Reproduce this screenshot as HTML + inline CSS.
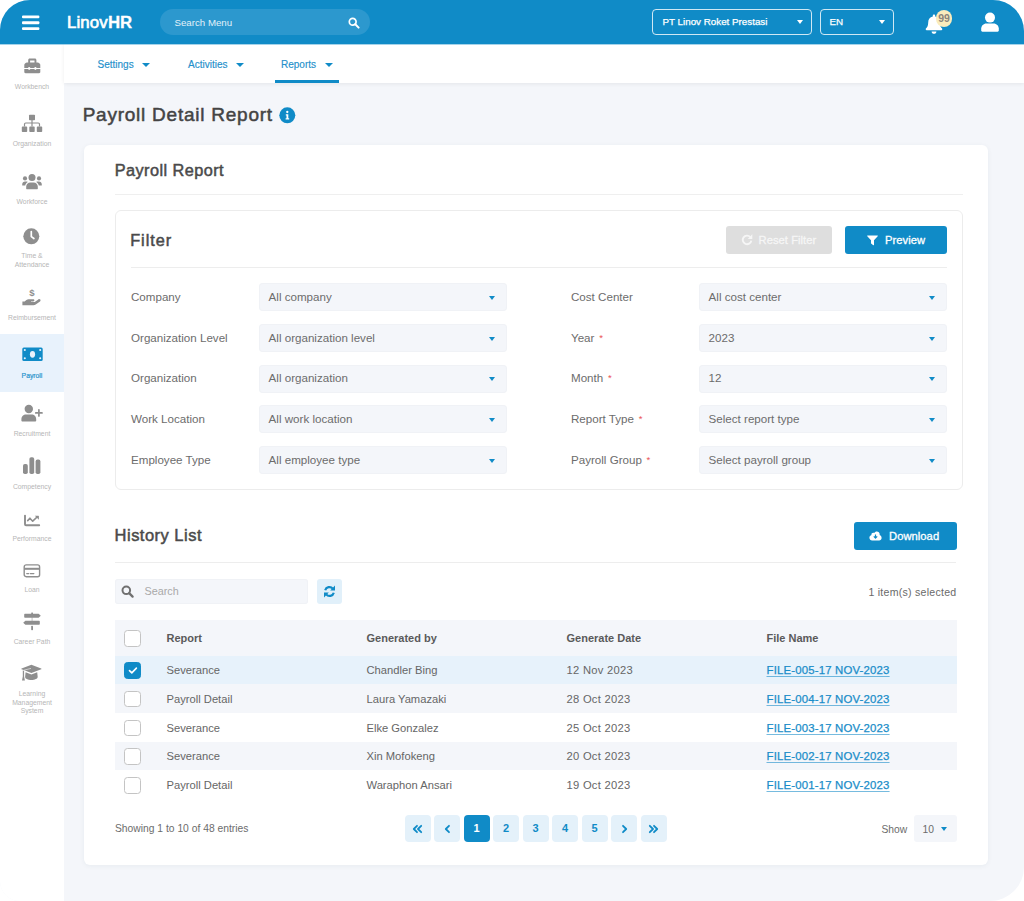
<!DOCTYPE html>
<html lang="en">
<head>
<meta charset="utf-8">
<title>Payroll Detail Report - LinovHR</title>
<style>
*{box-sizing:border-box;margin:0;padding:0}
html,body{width:1024px;height:901px;background:#fff;overflow:hidden}
body{font-family:"Liberation Sans",sans-serif;color:#4a4a4a;font-size:11px}
#app{position:absolute;left:0;top:0;width:1024px;height:901px;background:#f4f6fa;border-radius:30px 31px 34px 20px;overflow:hidden}
.abs{position:absolute}
#topbar{position:absolute;left:0;top:0;width:1024px;height:45px;background:#108bc7;background-clip:padding-box;border-bottom:1px solid rgba(16,139,199,.38)}
#subnav{position:absolute;left:64px;top:44px;width:960px;height:39px;background:#fff;box-shadow:0 1px 4px rgba(0,0,0,.07)}
#sidebar{position:absolute;left:0;top:44px;width:64px;height:857px;background:#fff}
.t{position:absolute;white-space:nowrap;line-height:1}
#topbar .pill{position:absolute;left:160px;top:9px;width:210px;height:26px;border-radius:13px;background:#2c98ce}
#topbar .sel{position:absolute;top:9px;height:26px;border:1px solid rgba(255,255,255,.8);border-radius:4px}
.w{color:#fff}
.caret{position:absolute;width:0;height:0;border-left:3.5px solid transparent;border-right:3.5px solid transparent;border-top:4px solid #fff}
.caret.b{border-top-color:#108bc7}
#subnav .t{color:#2490cb;font-size:10px;top:15.7px;-webkit-text-stroke:.15px #2490cb}
#subnav .caret{border-left-width:4px;border-right-width:4px;border-top-width:4.5px;margin-left:-.5px}
#sidebar .lb{position:absolute;left:0;width:64px;text-align:center;font-size:6.8px;line-height:8.8px;color:#b6b6b6}
#sidebar svg{position:absolute}
#sidebar .act{position:absolute;left:0;top:290px;width:64px;height:58px;background:#e8f2fc}
#card{position:absolute;left:84px;top:145px;width:904px;height:720px;background:#fff;border-radius:6px;box-shadow:0 1px 5px rgba(40,60,90,.06)}
#filter{position:absolute;left:115px;top:210px;width:848px;height:280px;border:1px solid #ececec;border-radius:6px;background:#fff}
.hr{position:absolute;height:1px;background:#ededed}
.h1{font-size:19px;color:#444;letter-spacing:.76px;-webkit-text-stroke:.5px #444}
.h2{font-size:16.3px;color:#4a4a4a;letter-spacing:.44px;-webkit-text-stroke:.5px #4a4a4a}
.lab{font-size:11.6px;color:#6c6c6c}
.req{color:#ea5455;font-size:9.5px;margin-left:1.5px;position:relative;top:-1px}
.select{position:absolute;width:248px;height:28px;background:#f4f6fa;box-shadow:inset 0 0 0 1px #f0f2f6;border-radius:4px}
.select .t{left:9.6px;top:7.9px;font-size:11.6px;color:#6c6c6c}
.select .caret{left:229.7px;top:12.6px;border-left-width:3.4px;border-right-width:3.4px;border-top-width:4px}
.btn{position:absolute;height:28px;border-radius:3px;background:#108bc7;color:#fff;font-size:11.2px;letter-spacing:.05px;-webkit-text-stroke:.3px #fff}
.btn .t{top:8.5px}
.row{position:absolute;left:115px;width:841.5px}
.cb{position:absolute;width:17px;height:16.5px;border:1px solid #c4c4c4;border-radius:3.5px;background:#fff}
.cb.on{background:#108bc7;border-color:#108bc7}
.th{font-size:11px;font-weight:bold;color:#5a5a5a}
.td{font-size:11.2px;color:#666}
.lnk{font-size:11.4px;color:#1a8dc9;text-decoration:underline;text-decoration-thickness:1px;text-decoration-color:rgba(26,141,201,.6);letter-spacing:.17px;text-underline-offset:1.5px;-webkit-text-stroke:.25px #1a8dc9}
.pg{position:absolute;top:815px;width:26px;height:27px;border-radius:4px;background:#e4f1fa;color:#108bc7;font-size:11px;font-weight:bold;text-align:center;line-height:27px}
.pg.on{background:#108bc7;color:#fff}
.pg svg{position:absolute;left:7.5px;top:8.5px}
.sm{font-size:10.3px;color:#6c6c6c}
</style>
</head>
<body>
<div id="app">
<div class="t h1" style="left:82.7px;top:105.3px">Payroll Detail Report</div>
<svg class="abs" style="left:279px;top:107px" width="17" height="17" viewBox="0 0 17 17"><circle cx="8.3" cy="8.3" r="8" fill="#108bc7"/><circle cx="8.3" cy="5" r="1.15" fill="#fff"/><path d="M6.8 7.3h2.5v3.9h0.9v1.2H6.6v-1.2h0.9V8.5H6.8z" fill="#fff"/></svg>
<div id="card"></div>
<div class="t h2" style="left:114.7px;top:162.3px">Payroll Report</div>
<div class="hr" style="left:115px;top:193.5px;width:848px;background:#efefef"></div>
<div id="filter"></div>
<div class="t h2" style="left:130.2px;top:231.6px;letter-spacing:.95px">Filter</div>
<div class="btn" style="left:726px;top:226px;width:106px;background:#dedede;color:#f6f6f6;-webkit-text-stroke-color:#f6f6f6"><svg class="abs" style="left:14.5px;top:8px" width="12" height="12" viewBox="0 0 12 12"><path d="M9.3 3.1A4.3 4.3 0 1 0 10.3 6.6" fill="none" stroke="#f6f6f6" stroke-width="1.9"/><path d="M11.3 0.3v4.6H6.7z" fill="#f6f6f6"/></svg><div class="t" style="left:32.5px">Reset Filter</div></div>
<div class="btn" style="left:845px;top:226px;width:102px"><svg class="abs" style="left:22px;top:9px" width="11" height="11" viewBox="0 0 11 11"><path d="M0.6 0.4h9.8c0.4 0 0.6 0.5 0.3 0.8L7 5.2v4.6c0 0.4-0.4 0.6-0.7 0.4L4.4 8.8c-0.2-0.1-0.4-0.4-0.4-0.6V5.2L0.3 1.2C0 0.9 0.2 0.4 0.6 0.4z" fill="#fff"/></svg><div class="t" style="left:40px">Preview</div></div>
<div class="hr" style="left:131px;top:266.5px;width:816px"></div>
<div class="t lab" style="left:131px;top:290.9px">Company</div><div class="select" style="left:259px;top:283px"><div class="t">All company</div><div class="caret b"></div></div>
<div class="t lab" style="left:131px;top:331.9px">Organization Level</div><div class="select" style="left:259px;top:324px"><div class="t">All organization level</div><div class="caret b"></div></div>
<div class="t lab" style="left:131px;top:372.4px">Organization</div><div class="select" style="left:259px;top:364.5px"><div class="t">All organization</div><div class="caret b"></div></div>
<div class="t lab" style="left:131px;top:413.2px">Work Location</div><div class="select" style="left:259px;top:405.3px"><div class="t">All work location</div><div class="caret b"></div></div>
<div class="t lab" style="left:131px;top:453.9px">Employee Type</div><div class="select" style="left:259px;top:446px"><div class="t">All employee type</div><div class="caret b"></div></div>
<div class="t lab" style="left:571px;top:290.9px">Cost Center</div><div class="select" style="left:699px;top:283px"><div class="t">All cost center</div><div class="caret b"></div></div>
<div class="t lab" style="left:571px;top:331.9px">Year <span class="req">*</span></div><div class="select" style="left:699px;top:324px"><div class="t">2023</div><div class="caret b"></div></div>
<div class="t lab" style="left:571px;top:372.4px">Month <span class="req">*</span></div><div class="select" style="left:699px;top:364.5px"><div class="t">12</div><div class="caret b"></div></div>
<div class="t lab" style="left:571px;top:413.2px">Report Type <span class="req">*</span></div><div class="select" style="left:699px;top:405.3px"><div class="t">Select report type</div><div class="caret b"></div></div>
<div class="t lab" style="left:571px;top:453.9px">Payroll Group <span class="req">*</span></div><div class="select" style="left:699px;top:446px"><div class="t">Select payroll group</div><div class="caret b"></div></div>

<div class="t h2" style="left:114.6px;top:526.7px;font-size:16.5px;letter-spacing:.48px">History List</div>
<div class="btn" style="left:854px;top:522px;width:102.5px"><svg class="abs" style="left:15px;top:8.5px" width="13" height="10" viewBox="0 0 13 10"><path d="M10.6 4.1c0.1-0.3 0.1-0.5 0.1-0.8 0-1.6-1.3-2.9-2.9-2.9-1.1 0-2.1 0.6-2.6 1.6-0.3-0.2-0.6-0.3-1-0.3-1 0-1.8 0.8-1.8 1.8 0 0.2 0 0.4 0.1 0.6C1.3 4.5 0.4 5.6 0.4 6.8c0 1.5 1.2 2.7 2.7 2.7h7c1.4 0 2.5-1.1 2.5-2.5 0-1.4-0.8-2.5-2-2.9z" fill="#fff"/><path d="M6.5 3.4v3.4M4.8 5.4l1.7 1.7 1.7-1.7" fill="none" stroke="#108bc7" stroke-width="1.2" stroke-linejoin="round"/></svg><div class="t" style="left:35px">Download</div></div>
<div class="hr" style="left:115px;top:562px;width:841px"></div>
<div class="abs" style="left:115px;top:579px;width:192.5px;height:25px;background:#f4f6fa;box-shadow:inset 0 0 0 1px #f0f2f6;border-radius:3px"><svg class="abs" style="left:6px;top:6px" width="14" height="14" viewBox="0 0 14 14"><circle cx="5.3" cy="5.3" r="3.8" fill="none" stroke="#707070" stroke-width="2"/><path d="M8.4 8.4L11.6 11.6" stroke="#707070" stroke-width="2.3" stroke-linecap="round"/></svg><div class="t" style="left:29.5px;top:7px;font-size:10.8px;color:#a9a9a9">Search</div></div>
<div class="abs" style="left:317px;top:579px;width:25px;height:25px;background:#e1f0fa;border-radius:3px"><svg class="abs" style="left:6px;top:6px" width="13" height="13" viewBox="0 0 13 13"><path d="M2.2 5.3A4.4 4.4 0 0 1 9.8 3.6" fill="none" stroke="#108bc7" stroke-width="2.2"/><path d="M12 0.6v4.8H7.2z" fill="#108bc7"/><path d="M10.8 7.7A4.4 4.4 0 0 1 3.2 9.4" fill="none" stroke="#108bc7" stroke-width="2.2"/><path d="M1 12.4V7.6h4.8z" fill="#108bc7"/></svg></div>
<div class="t" style="right:67.5px;top:586.5px;font-size:10.6px;letter-spacing:.25px;color:#6a6a6a">1 item(s) selected</div>
<div class="row" style="top:620px;height:36px;background:#f4f6fa"></div>
<div class="cb" style="left:124px;top:630px"></div>
<div class="t th" style="left:166.5px;top:633px">Report</div><div class="t th" style="left:366.5px;top:633px">Generated by</div><div class="t th" style="left:566.5px;top:633px">Generate Date</div><div class="t th" style="left:766.5px;top:633px">File Name</div>
<div class="row" style="top:656px;height:28px;background:#e7f2fb"></div><div class="cb on" style="left:124px;top:662px"><svg style="position:absolute;left:2.5px;top:3px" width="10" height="9" viewBox="0 0 10 9"><path d="M1.5 4.6l2.3 2.3 4.6-4.8" fill="none" stroke="#fff" stroke-width="1.6" stroke-linecap="round" stroke-linejoin="round"/></svg></div><div class="t td" style="left:166.5px;top:665px">Severance</div><div class="t td" style="left:366.5px;top:665px">Chandler Bing</div><div class="t td" style="left:566.5px;top:665px;letter-spacing:.28px">12 Nov 2023</div><div class="t lnk" style="left:766.5px;top:665px">FILE-005-17 NOV-2023</div>
<div class="row" style="top:684px;height:29px;background:#f4f6fa"></div><div class="cb" style="left:124px;top:690.5px"></div><div class="t td" style="left:166.5px;top:694px">Payroll Detail</div><div class="t td" style="left:366.5px;top:694px">Laura Yamazaki</div><div class="t td" style="left:566.5px;top:694px;letter-spacing:.28px">28 Oct 2023</div><div class="t lnk" style="left:766.5px;top:694px">FILE-004-17 NOV-2023</div>
<div class="row" style="top:713px;height:29px;background:#fff"></div><div class="cb" style="left:124px;top:719.5px"></div><div class="t td" style="left:166.5px;top:723px">Severance</div><div class="t td" style="left:366.5px;top:723px">Elke Gonzalez</div><div class="t td" style="left:566.5px;top:723px;letter-spacing:.28px">25 Oct 2023</div><div class="t lnk" style="left:766.5px;top:723px">FILE-003-17 NOV-2023</div>
<div class="row" style="top:742px;height:28px;background:#f4f6fa"></div><div class="cb" style="left:124px;top:748.3px"></div><div class="t td" style="left:166.5px;top:751px">Severance</div><div class="t td" style="left:366.5px;top:751px">Xin Mofokeng</div><div class="t td" style="left:566.5px;top:751px;letter-spacing:.28px">20 Oct 2023</div><div class="t lnk" style="left:766.5px;top:751px">FILE-002-17 NOV-2023</div>
<div class="row" style="top:770px;height:29px;background:#fff"></div><div class="cb" style="left:124px;top:777.2px"></div><div class="t td" style="left:166.5px;top:780px">Payroll Detail</div><div class="t td" style="left:366.5px;top:780px">Waraphon Ansari</div><div class="t td" style="left:566.5px;top:780px;letter-spacing:.28px">19 Oct 2023</div><div class="t lnk" style="left:766.5px;top:780px">FILE-001-17 NOV-2023</div>
<div class="t sm" style="left:115px;top:823.5px">Showing 1 to 10 of 48 entries</div>
<div class="pg" style="left:404.5px"><svg width="11" height="10" viewBox="0 0 11 10"><path d="M5 1.8L1.8 5 5 8.2M9.2 1.8L6 5l3.2 3.2" fill="none" stroke="#108bc7" stroke-width="1.8" stroke-linecap="round" stroke-linejoin="round"/></svg></div><div class="pg" style="left:434px"><svg width="11" height="10" viewBox="0 0 11 10"><path d="M7 1.8L3.8 5 7 8.2" fill="none" stroke="#108bc7" stroke-width="1.8" stroke-linecap="round" stroke-linejoin="round"/></svg></div><div class="pg on" style="left:463.5px">1</div><div class="pg" style="left:493px">2</div><div class="pg" style="left:522.5px">3</div><div class="pg" style="left:552px">4</div><div class="pg" style="left:581.5px">5</div><div class="pg" style="left:611px"><svg width="11" height="10" viewBox="0 0 11 10"><path d="M4 1.8L7.2 5 4 8.2" fill="none" stroke="#108bc7" stroke-width="1.8" stroke-linecap="round" stroke-linejoin="round"/></svg></div><div class="pg" style="left:640.5px"><svg width="11" height="10" viewBox="0 0 11 10"><path d="M1.8 1.8L5 5 1.8 8.2M6 1.8L9.2 5 6 8.2" fill="none" stroke="#108bc7" stroke-width="1.8" stroke-linecap="round" stroke-linejoin="round"/></svg></div>
<div class="t sm" style="left:881.5px;top:824.5px">Show</div>
<div class="abs" style="left:913.5px;top:815px;width:43px;height:27px;background:#f4f6fa;border-radius:3px"><div class="t sm" style="left:9px;top:9.5px">10</div><div class="caret b" style="left:27.7px;top:12px"></div></div>
<div id="sidebar">
<div class="act"></div>
<!-- workbench -->
<svg style="left:23px;top:14px" width="18" height="16" viewBox="0 0 18 16"><path d="M5.2 5V2c0-0.8 0.7-1.5 1.5-1.5h5.2c0.8 0 1.5 0.7 1.5 1.5v3h-1.9V2.4H7.1V5z" fill="#8e8e8e"/><path d="M3.8 4.5h11c0.5 0 0.9 0.2 1.2 0.5l0.8 0.8c0.3 0.3 0.5 0.7 0.5 1.2v2.9H13.6a1.3 1.3 0 0 0-2.4 0H7.4a1.3 1.3 0 0 0-2.4 0H1.3V7c0-0.5 0.2-0.9 0.5-1.2l0.8-0.8c0.3-0.3 0.7-0.5 1.2-0.5z" fill="#8e8e8e"/><path d="M1.3 11.1H5a1.3 1.3 0 0 0 2.4 0h3.8a1.3 1.3 0 0 0 2.4 0h3.7v3c0 0.7-0.5 1.2-1.2 1.2H2.5c-0.7 0-1.2-0.5-1.2-1.2z" fill="#8e8e8e"/></svg>
<div class="lb" style="top:38.8px">Workbench</div>
<!-- organization -->
<svg style="left:21px;top:70px" width="22" height="19" viewBox="0 0 22 19"><rect x="8" y="0.8" width="6" height="5.4" rx="0.8" fill="#8e8e8e"/><rect x="0.8" y="12.6" width="5.4" height="5.4" rx="0.8" fill="#8e8e8e"/><rect x="8.3" y="12.6" width="5.4" height="5.4" rx="0.8" fill="#8e8e8e"/><rect x="15.8" y="12.6" width="5.4" height="5.4" rx="0.8" fill="#8e8e8e"/><path d="M11 6v6.6M3.5 12.6V10.2c0-0.7 0.5-1.2 1.2-1.2h12.6c0.7 0 1.2 0.5 1.2 1.2v2.4" fill="none" stroke="#8e8e8e" stroke-width="1.2"/></svg>
<div class="lb" style="top:96.3px">Organization</div>
<!-- workforce -->
<svg style="left:21px;top:128.5px" width="22" height="17" viewBox="0 0 22 17"><circle cx="11" cy="4.6" r="3.5" fill="#8e8e8e"/><circle cx="4" cy="5.4" r="2.1" fill="#8e8e8e"/><circle cx="18" cy="5.4" r="2.1" fill="#8e8e8e"/><path d="M5.2 15.8v-2.3c0-2.3 1.8-4.1 4.1-4.1h3.4c2.3 0 4.1 1.8 4.1 4.1v2.3c0 0.3-0.2 0.5-0.5 0.5H5.7c-0.3 0-0.5-0.2-0.5-0.5z" fill="#8e8e8e"/><path d="M1.2 12.6v-1.2c0-1.6 1.3-2.8 2.8-2.8h1.6c0.4 0 0.8 0.1 1.1 0.3-1.3 0.8-2.2 2.1-2.5 3.7z" fill="#8e8e8e"/><path d="M20.8 12.6v-1.2c0-1.6-1.3-2.8-2.8-2.8h-1.6c-0.4 0-0.8 0.1-1.1 0.3 1.3 0.8 2.2 2.1 2.5 3.7z" fill="#8e8e8e"/></svg>
<div class="lb" style="top:153.8px">Workforce</div>
<!-- time -->
<svg style="left:23px;top:184px" width="17" height="17" viewBox="0 0 17 17"><circle cx="8.3" cy="8.3" r="8" fill="#8e8e8e"/><path d="M8.3 3.6v5l2.6 1.9" fill="none" stroke="#fff" stroke-width="1.7" stroke-linecap="round" stroke-linejoin="round"/></svg>
<div class="lb" style="top:208.3px">Time &amp;<br>Attendance</div>
<!-- reimbursement -->
<svg style="left:22px;top:243px" width="20" height="20" viewBox="0 0 20 20"><text x="10" y="9.4" font-family="Liberation Sans,sans-serif" font-size="9.6" font-weight="bold" text-anchor="middle" fill="#8e8e8e">$</text><path d="M0.4 14.4h2.2l1.8-1.4c0.7-0.5 1.5-0.8 2.3-0.8h4.5c0.7 0 1.2 0.5 1.2 1.1 0 0.6-0.5 1.1-1.2 1.1H9v0.7h3.7l3.6-2.7c0.6-0.5 1.5-0.4 2 0.2 0.4 0.6 0.3 1.4-0.3 1.8l-4.3 3.2c-0.6 0.5-1.4 0.7-2.2 0.7H0.4z" fill="#8e8e8e"/></svg>
<div class="lb" style="top:269.8px">Reimbursement</div>
<!-- payroll -->
<svg style="left:22px;top:303.1px" width="21" height="15" viewBox="0 0 21 15"><rect x="0.3" y="0.5" width="20.4" height="13.4" rx="1.5" fill="#108bc7"/><ellipse cx="10.5" cy="7.3" rx="2.6" ry="3.4" fill="#e8f2fc"/><circle cx="2.8" cy="3" r="1.05" fill="#e8f2fc"/><circle cx="18.2" cy="3" r="1.05" fill="#e8f2fc"/><circle cx="2.8" cy="11.3" r="1.05" fill="#e8f2fc"/><circle cx="18.2" cy="11.3" r="1.05" fill="#e8f2fc"/></svg>
<div class="lb" style="top:327.8px;color:#2a94cd;-webkit-text-stroke:0.2px #2a94cd">Payroll</div>
<!-- recruitment -->
<svg style="left:21px;top:360px" width="22" height="18" viewBox="0 0 22 18"><circle cx="7.8" cy="5" r="4.2" fill="#8e8e8e"/><path d="M0.4 16.4v-1.2c0-2.6 2.1-4.6 4.6-4.6h5.6c2.6 0 4.6 2.1 4.6 4.6v1.2c0 0.7-0.5 1.2-1.2 1.2H1.6c-0.7 0-1.2-0.5-1.2-1.2z" fill="#8e8e8e"/><path d="M17.9 5.8v6.2M14.8 8.9h6.2" stroke="#8e8e8e" stroke-width="1.7" stroke-linecap="round"/></svg>
<div class="lb" style="top:385.8px">Recruitment</div>
<!-- competency -->
<svg style="left:22px;top:412px" width="20" height="19" viewBox="0 0 20 19"><rect x="1" y="8" width="4.8" height="10" rx="1.8" fill="#8e8e8e"/><rect x="7.4" y="1.2" width="4.8" height="16.8" rx="1.8" fill="#8e8e8e"/><rect x="13.6" y="3.6" width="4.8" height="14.4" rx="1.8" fill="#8e8e8e"/></svg>
<div class="lb" style="top:439.3px">Competency</div>
<!-- performance -->
<svg style="left:23px;top:470px" width="18" height="14" viewBox="0 0 18 14"><path d="M2 1.6v8.6c0 0.6 0.4 1 1 1h13.2" fill="none" stroke="#8e8e8e" stroke-width="1.9" stroke-linecap="round"/><path d="M4.7 6.6l2.2-2.4 2.8 3 4.4-4.2" fill="none" stroke="#8e8e8e" stroke-width="1.6" stroke-linecap="round" stroke-linejoin="round"/><path d="M11.8 1.7h3.6c0.3 0 0.5 0.2 0.5 0.5v3.6z" fill="#8e8e8e"/></svg>
<div class="lb" style="top:491.3px">Performance</div>
<!-- loan -->
<svg style="left:23px;top:520px" width="18" height="14" viewBox="0 0 18 14"><rect x="1.2" y="0.9" width="15.4" height="11.8" rx="2" fill="none" stroke="#8e8e8e" stroke-width="1.4"/><rect x="1.2" y="3.8" width="15.4" height="2" fill="#8e8e8e"/><path d="M3.8 9.6h1.8M7.4 9.6h3.4" stroke="#8e8e8e" stroke-width="1.4" stroke-linecap="round"/></svg>
<div class="lb" style="top:542.3px">Loan</div>
<!-- career path -->
<svg style="left:22px;top:568px" width="21" height="19" viewBox="0 0 21 19"><rect x="9.2" y="0.6" width="1.8" height="1.6" rx="0.4" fill="#8e8e8e"/><rect x="9.2" y="13.8" width="1.8" height="4.5" rx="0.7" fill="#8e8e8e"/><rect x="9.5" y="5" width="1.2" height="4.5" fill="#8e8e8e" opacity="0.45"/><path d="M2.9 1.7h13.3c0.3 0 0.5 0.1 0.7 0.3l1.9 1.7-1.9 1.7c-0.2 0.2-0.4 0.3-0.7 0.3H2.9c-0.4 0-0.7-0.3-0.7-0.7V2.4c0-0.4 0.3-0.7 0.7-0.7z" fill="#8e8e8e"/><path d="M17.1 8.7H3.8c-0.3 0-0.5 0.1-0.7 0.3L1.2 10.7l1.9 1.7c0.2 0.2 0.4 0.3 0.7 0.3h13.3c0.4 0 0.7-0.3 0.7-0.7V9.4c0-0.4-0.3-0.7-0.7-0.7z" fill="#8e8e8e"/></svg>
<div class="lb" style="top:593.8px">Career Path</div>
<!-- lms -->
<svg style="left:20px;top:620px" width="23" height="18" viewBox="0 0 23 18"><path d="M11.4 0.7L21.2 4.4c0.4 0.1 0.4 0.7 0 0.8L11.4 8.9 1.6 5.2c-0.4-0.1-0.4-0.7 0-0.8z" fill="#8e8e8e"/><path d="M5.6 8.3l5.8 2.2 5.8-2.2 0.5 4.6c0 1.6-2.8 3-6.3 3s-6.3-1.4-6.3-3z" fill="#8e8e8e"/><path d="M2.8 6.2l1.3 0.5v5.7l0.8 4h-2.9l0.8-4z" fill="#8e8e8e"/><path d="M3.4 6.3L11 4.4" stroke="#fff" stroke-width="0.7" fill="none" opacity="0.8"/></svg>
<div class="lb" style="top:645.8px">Learning<br>Management<br>System</div>
</div>
<div id="subnav">
<div class="t" style="left:33.5px">Settings</div><div class="caret b" style="left:78.5px;top:18.5px"></div>
<div class="t" style="left:124px">Activities</div><div class="caret b" style="left:172.5px;top:18.5px"></div>
<div class="t" style="left:217px">Reports</div><div class="caret b" style="left:261.5px;top:18.5px"></div>
<div class="abs" style="left:211px;top:36.4px;width:64px;height:2.6px;background:#108bc7"></div>
</div>
<div id="topbar">
<svg class="abs" style="left:22px;top:14.5px" width="18" height="16" viewBox="0 0 18 16"><rect x="0" y="0.4" width="17.4" height="2.9" rx="1" fill="#fff"/><rect x="0" y="6.3" width="17.4" height="2.9" rx="1" fill="#fff"/><rect x="0" y="12.2" width="17.4" height="2.9" rx="1" fill="#fff"/></svg>
<div class="t w" style="left:67px;top:15px;font-size:16.8px;font-weight:bold;letter-spacing:-0.1px;-webkit-text-stroke:0.3px #fff"><span style="font-weight:normal;-webkit-text-stroke:0.65px #fff;letter-spacing:.15px">Linov</span>HR</div>
<div class="pill"></div>
<div class="t" style="left:174.5px;top:17.6px;font-size:9.7px;color:#e2f1f9">Search Menu</div>
<svg class="abs" style="left:348px;top:16.5px" width="12" height="12" viewBox="0 0 12 12"><circle cx="4.7" cy="4.7" r="3.4" fill="none" stroke="#fff" stroke-width="1.7"/><path d="M7.3 7.3L10.6 10.6" stroke="#fff" stroke-width="2" stroke-linecap="round"/></svg>
<div class="sel" style="left:652px;width:160px"></div>
<div class="t w" style="left:662.5px;top:17px;font-size:9.8px;-webkit-text-stroke:0.25px #fff">PT Linov Roket Prestasi</div>
<div class="caret" style="left:796.5px;top:20px"></div>
<div class="sel" style="left:820px;width:74px"></div>
<div class="t w" style="left:829.5px;top:17px;font-size:9.8px;-webkit-text-stroke:0.25px #fff">EN</div>
<div class="caret" style="left:878.5px;top:20px"></div>
<svg class="abs" style="left:925px;top:14px" width="18" height="21" viewBox="0 0 18 21"><path d="M9 0.6c-0.7 0-1.2 0.5-1.2 1.2v0.7C4.9 3.1 3.2 5.5 3.2 8.4c0 3.2-0.9 4.7-2.3 6.2-0.5 0.6-0.1 1.6 0.7 1.6h14.8c0.8 0 1.2-1 0.7-1.6-1.4-1.5-2.3-3-2.3-6.2 0-2.9-1.7-5.3-4.6-5.9V1.8C10.2 1.1 9.7 0.6 9 0.6z" fill="#fff"/><path d="M6.6 17.4h4.8c0 1.3-1.1 2.4-2.4 2.4s-2.4-1.1-2.4-2.4z" fill="#fff"/></svg>
<div class="abs" style="left:935.7px;top:10.2px;width:16.5px;height:16.5px;border-radius:50%;background:#faecbd"></div>
<div class="t" style="left:938.2px;top:13.4px;font-size:10.5px;font-weight:bold;color:#8b857c;letter-spacing:-0.1px">99</div>
<svg class="abs" style="left:980px;top:12px" width="20" height="21" viewBox="0 0 20 21"><circle cx="10" cy="5.6" r="5" fill="#fff"/><path d="M1.2 18.6v-2c0-2.9 2.3-5.2 5.2-5.2h7.2c2.9 0 5.2 2.3 5.2 5.2v2c0 0.7-0.5 1.2-1.2 1.2H2.4c-0.7 0-1.2-0.5-1.2-1.2z" fill="#fff"/></svg>
</div>
</div>
</body>
</html>
